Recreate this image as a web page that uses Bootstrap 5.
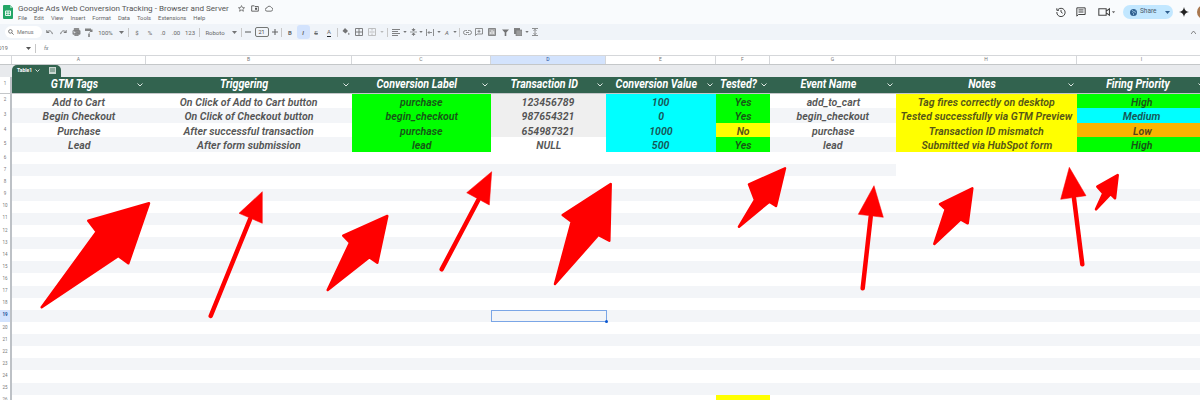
<!DOCTYPE html>
<html lang="en">
<head>
    <meta charset="UTF-8">
    <title>Google Ads Web Conversion Tracking - Browser and Server</title>
    <link href="https://cdn.jsdelivr.net/npm/bootstrap@5.3.0/dist/css/bootstrap.min.css" rel="stylesheet">
    <style>
        html, body { width: 1200px; height: 400px; overflow: hidden; }
        body { background: #fff; font-family: Roboto, "Liberation Sans", sans-serif; color: #444746; position: relative; }
        svg { display: block; flex: none; }
        .titlebar { height: 24px; background: #f9fbfd; padding: 0 0 0 3px; }
        .title-block { margin-left: 5px; }
        .doc-title { font-size: 8.1px; line-height: 11px; color: #555; }
        .doc-icons { gap: 6px; margin-left: 9px; }
        .menus { font-size: 5.8px; line-height: 8px; color: #666; gap: 7px; }
        .top-right { width: 147px; flex: none; }
        .ml-3 { margin-left: 3px; } .ml-6 { margin-left: 6px; } .ml-7 { margin-left: 7px; } .ml-8 { margin-left: 8px; } .ml-10 { margin-left: 10px; } .ml-12 { margin-left: 12px; }
        .share { height: 14px; }
        .share .btn { background: #c2e7ff; border: 0; color: #4a5a68; font-size: 6.5px; padding: 0; height: 14px; display: flex; align-items: center; }
        .share .s-main { width: 38px; padding-left: 7px; gap: 3px; border-radius: 7px 0 0 7px; margin-right: 1px; }
        .share .s-drop { width: 12px; justify-content: center; border-radius: 0 7px 7px 0; }
        .avatar { width: 14px; height: 14px; background: #a9784f; flex: none; }

        .toolbar { height: 16px; background: #f0f4f9; padding-left: 5px; }
        .search { width: 37px; height: 12px; background: #fff; font-size: 5.5px; color: #777; padding-left: 3px; gap: 3px; margin-right: 1.5px; flex: none; }
        .tb { width: 13px; height: 14px; flex: none; display: flex; align-items: center; justify-content: center; font-size: 6px; color: #666; }
        .tb svg { opacity: .8; }
        .tb.active { background: #d3e3fd; border-radius: 3px; }
        .tb.w5 { width: 5px; } .tb.w7 { width: 7px; } .tb.w8 { width: 8px; } .tb.w10 { width: 10px; } .tb.w11 { width: 11px; } .tb.w15 { width: 15px; }
        .tb.w20 { width: 20px; } .tb.w27 { width: 27px; }
        .sep { width: 1px; height: 9px; background: #c7c7c7; flex: none; margin: 0 1.5px; }
        .size-box { width: 14px; height: 10px; border: 1px solid #747775; border-radius: 2px; font-size: 5.5px; line-height: 8px; text-align: center; flex: none; margin: 0 1px 0 3px; color: #444; }
        .formula { height: 14.5px; background: #fff; font-size: 5.5px; color: #666; padding-top: 2px; }
        .formula .ref { width: 28px; margin-left: -2px; }

        .gs-row { display: grid; grid-template-columns: 12px 134px 206px 139px 115px 110px 54px 126px 181px 130px; grid-template-rows: 100%; width: 1207px; height: 12.13px; }
        .gs-row.alt { background: #f3f5f8; }
        .rh { background: #fff; border-right: 2px solid #bdc1c6; font-size: 4.5px; color: #777; text-align: center; display: flex; align-items: center; justify-content: center; }
        .rh.on { background: #d3e3fd; color: #1f4f99; font-weight: 700; }
        .col-row { height: 10.5px; border-top: 1px solid #d5d7da; border-bottom: 1px solid #c4c7c9; background: #fff; }
        .col-row > div { font-size: 5px; color: #777; display: flex; align-items: center; justify-content: center; border-right: 1px solid #d5d7da; }
        .col-row .on { background: #d3e3fd; color: #1f4f99; }
        .band { height: 11.5px; background: #e8eaed; padding-left: 12px; }
        .table-tab { width: 49px; height: 11.5px; background: #32634f; border-radius: 5px 5px 0 0; color: #fff; font-size: 5px; font-weight: 700; padding-left: 5px; gap: 3px; }
        .head-row { height: 16px; background: #32634f; border-bottom: 1px solid #c4c7c9; box-sizing: content-box; }
        .head-row .th { color: #fff; font-size: 12.4px; font-weight: 700; font-style: italic; padding-right: 3px; white-space: nowrap; }
        .th span { flex: 1 1 0; display: flex; justify-content: center; }
        .th span b { font-weight: 700; flex: none; transform: scaleX(.86); }
        .data-row { height: 14.67px; }
        .data-row .td { display: flex; justify-content: center; font-size: 11.6px; line-height: 16.5px; font-weight: 700; font-style: italic; color: rgba(30, 30, 30, .76); white-space: nowrap; }
        .td span { flex: none; transform: scaleX(.91); }
        .bg-g { background: #0f0; } .bg-c { background: #0ff; } .bg-y { background: #ff0; } .bg-o { background: #fbb400; } .bg-e { background: #efefef; } .bg-w { background: #fff; }
        .span-stripe { grid-column: 2 / 9; background: #f3f5f8; }
        .cell-sel { grid-column: 5; border: 1px solid #7ba6e6; position: relative; margin: 0 -1px 0 0; }
        .cell-sel::after { content: ""; position: absolute; right: -2px; bottom: -2px; width: 3px; height: 3px; background: #0b57d0; border-radius: 50%; }
        .cell-f { grid-column: 7; }
        .arrows { position: absolute; left: 0; top: 0; pointer-events: none; }
        .arrows polygon { fill: #f00; stroke: #f00; stroke-width: 2.5; stroke-linejoin: round; }
        .arrows line { stroke: #f00; stroke-width: 4.5; stroke-linecap: round; }
        .arrows polygon.head { stroke-width: .5; }
    </style>
</head>
<body>
    <div class="titlebar d-flex align-items-center">
        <svg width="10" height="14" viewBox="0 0 10 14"><path d="M1 0h6l3 3v10a1 1 0 0 1-1 1H1a1 1 0 0 1-1-1V1a1 1 0 0 1 1-1z" fill="#23a566"/><path d="M7 0l3 3H7z" fill="#8ed1b1"/><path d="M2.5 6h5v4.500h-5z M5 6v4.500 M2.500 8.200h5" fill="none" stroke="#fff" stroke-width=".9"/></svg>
        <div class="title-block">
            <div class="d-flex align-items-center">
                <span class="doc-title">Google Ads Web Conversion Tracking - Browser and Server</span>
                <div class="doc-icons d-flex align-items-center">
                    <svg width="7" height="7" viewBox="0 0 12 12"><path d="M6 1l1.500 3.400 3.700.3-2.800 2.400.9 3.600L6 8.800l-3.300 1.900.9-3.600L.8 4.700l3.700-.3z" fill="none" stroke="#555" stroke-width="1.200"/></svg>
                    <svg width="8" height="7" viewBox="0 0 12 10"><path d="M1 1h4l1 1h5v7H1z" fill="none" stroke="#555" stroke-width="1.300"/><path d="M6 4h3v3H6z" fill="#555"/></svg>
                    <svg width="8" height="7" viewBox="0 0 12 10"><path d="M3 9a2.500 2.500 0 0 1 0-5 3.500 3.500 0 0 1 6.500-.5A2.800 2.800 0 0 1 9 9z" fill="none" stroke="#555" stroke-width="1.200"/></svg>
                </div>
            </div>
            <div class="menus d-flex"><span>File</span><span>Edit</span><span>View</span><span>Insert</span><span>Format</span><span>Data</span><span>Tools</span><span>Extensions</span><span>Help</span></div>
        </div>
        <div class="top-right ms-auto d-flex align-items-center">
            <svg class="ml-3" width="10" height="10" viewBox="0 0 12 12"><path d="M2 3.500A5 5 0 1 1 1 6M1 1.500v2.500h2.500M6 3.500V6l2 1.500" fill="none" stroke="#444" stroke-width="1.200"/></svg>
            <svg class="ml-10" width="10" height="10" viewBox="0 0 12 12"><path d="M1 1h10v8h-8l-2 2z M3 3.500h6M3 6h6" fill="none" stroke="#444" stroke-width="1.200"/></svg>
            <svg class="ml-12" width="18" height="10" viewBox="0 0 22 12"><path d="M1 2h9v8H1z M10 5l4-3v8l-4-3" fill="none" stroke="#444" stroke-width="1.300"/><path d="M17 5h4l-2 2.500z" fill="#666"/></svg>
            <div class="share btn-group ml-7">
                <button class="btn s-main"><svg width="7" height="7" viewBox="0 0 8 8"><circle cx="4" cy="4" r="4" fill="#2f5f8f"/><path d="M2 1l2 1.500L3 4l1 1v2M6 2L5 3.500l2 1" stroke="#c2e7ff" stroke-width=".7" fill="none"/></svg>Share</button>
                <button class="btn s-drop"><svg width="5" height="3" viewBox="0 0 5 3"><path d="M0 0h5L2.500 3z" fill="#2f5f8f"/></svg></button>
            </div>
            <svg class="ml-6" width="10" height="10" viewBox="0 0 10 10"><path d="M5 0c.5 3 2 4.500 5 5-3 .5-4.500 2-5 5-.5-3-2-4.500-5-5 3-.5 4.500-2 5-5z" fill="#222"/></svg>
            <div class="avatar rounded-circle ml-8"></div>
        </div>
    </div>

    <div class="toolbar d-flex align-items-center">
        <div class="search rounded-pill d-flex align-items-center"><svg width="6" height="6" viewBox="0 0 8 8"><path d="M3.200.8a2.400 2.400 0 1 0 0 4.800 2.400 2.400 0 0 0 0-4.800zM5 5l2.500 2.500" fill="none" stroke="#555" stroke-width="1"/></svg>Menus</div>
        <div class="tb"><svg width="8" height="7" viewBox="0 0 10 8"><path d="M1 1v3h3M1 4c2-3 6-3 7 2" fill="none" stroke="#555" stroke-width="1.200"/></svg></div>
        <div class="tb"><svg width="8" height="7" viewBox="0 0 10 8"><path d="M9 1v3H6M9 4C7 1 3 1 2 6" fill="none" stroke="#555" stroke-width="1.200"/></svg></div>
        <div class="tb"><svg width="9" height="8" viewBox="0 0 10 9"><path d="M2.500 3V.5h5V3M1 3h8v4H7.500M2.500 7H1V3M3 5.500h4v3H3z" fill="#777" stroke="#555" stroke-width=".8"/></svg></div>
        <div class="tb"><svg width="8" height="9" viewBox="0 0 8 9"><path d="M0 .5h6v2.500H0zM6 1.500h1.500V4H4v1.500M3.200 5.500h1.600V9H3.200z" fill="#666"/></svg></div>
        <div class="tb w20">100%</div>
        <div class="tb w11"><svg width="5" height="3" viewBox="0 0 5 3"><path d="M0 0h5L2.500 3z" fill="#555"/></svg></div>
        <div class="sep"></div>
        <div class="tb">$</div>
        <div class="tb">%</div>
        <div class="tb">.0</div>
        <div class="tb">.00</div>
        <div class="tb w15">123</div>
        <div class="sep"></div>
        <div class="tb w27">Roboto</div>
        <div class="tb w11"><svg width="5" height="3" viewBox="0 0 5 3"><path d="M0 0h5L2.500 3z" fill="#555"/></svg></div>
        <div class="sep"></div>
        <div class="tb w8"><svg width="6" height="2" viewBox="0 0 6 2"><path d="M0 1h6" stroke="#444" stroke-width="1.100"/></svg></div>
        <div class="size-box">21</div>
        <div class="tb w10"><svg width="6" height="6" viewBox="0 0 6 6"><path d="M0 3h6M3 0v6" stroke="#444" stroke-width="1.100"/></svg></div>
        <div class="sep"></div>
        <div class="tb fw-bold">B</div>
        <div class="tb active fw-bold fst-italic">I</div>
        <div class="tb text-decoration-line-through">S</div>
        <div class="tb"><span class="border-bottom border-dark">A</span></div>
        <div class="sep"></div>
        <div class="tb"><svg width="8" height="8" viewBox="0 0 8 8"><path d="M3 0l3 3-2.500 2.500L.5 3z" fill="#555"/><path d="M6.800 4.500l.8 1.500a.8.800 0 1 1-1.600 0z" fill="#555"/></svg></div>
        <div class="tb"><svg width="8" height="8" viewBox="0 0 8 8"><path d="M.5.500h7v7h-7zM4 .5v7M.5 4h7" fill="none" stroke="#555" stroke-width=".9"/></svg></div>
        <div class="tb"><svg width="8" height="8" viewBox="0 0 8 8"><path d="M.5.500h7v7h-7zM4 .5v2M4 5.500v2M1.500 4h5" fill="none" stroke="#aaa" stroke-width=".9"/></svg></div>
        <div class="tb w7"><svg width="4" height="2" viewBox="0 0 5 3"><path d="M0 0h5L2.500 3z" fill="#aaa"/></svg></div>
        <div class="sep"></div>
        <div class="tb"><svg width="8" height="7" viewBox="0 0 8 7"><path d="M0 .5h8M0 2.500h6M0 4.500h8M0 6.500h6" stroke="#555" stroke-width=".9"/></svg></div>
        <div class="tb w5"><svg width="4" height="2" viewBox="0 0 5 3"><path d="M0 0h5L2.500 3z" fill="#555"/></svg></div>
        <div class="tb w11"><svg width="7" height="8" viewBox="0 0 7 8"><path d="M0 4h7M3.500 0v3M3.500 5v3M2 1.500h3L3.500 3zM2 6.500h3L3.500 5z" fill="#555" stroke="#555" stroke-width=".7"/></svg></div>
        <div class="tb w5"><svg width="4" height="2" viewBox="0 0 5 3"><path d="M0 0h5L2.500 3z" fill="#555"/></svg></div>
        <div class="tb"><svg width="8" height="7" viewBox="0 0 8 7"><path d="M.5 0v7M7.500 0v7M2 3.500h4M3.500 2L2 3.500 3.500 5" fill="none" stroke="#555" stroke-width=".8"/></svg></div>
        <div class="tb w5"><svg width="4" height="2" viewBox="0 0 5 3"><path d="M0 0h5L2.500 3z" fill="#555"/></svg></div>
        <div class="tb w11"><span class="fst-italic">A</span></div>
        <div class="tb w5"><svg width="4" height="2" viewBox="0 0 5 3"><path d="M0 0h5L2.500 3z" fill="#555"/></svg></div>
        <div class="sep"></div>
        <div class="tb w11"><svg width="9" height="5" viewBox="0 0 9 5"><path d="M4 .5H2.500a2 2 0 0 0 0 4H4M5 .5h1.500a2 2 0 0 1 0 4H5M3 2.500h3" fill="none" stroke="#555" stroke-width=".8"/></svg></div>
        <div class="tb"><svg width="8" height="8" viewBox="0 0 8 8"><path d="M.5.500h7v5.500H2L.5 7.500zM4 1.800v3M2.500 3.300h3" fill="none" stroke="#555" stroke-width=".8"/></svg></div>
        <div class="tb"><svg width="8" height="8" viewBox="0 0 8 8"><path d="M.5.500h7v7h-7z" fill="#999" stroke="#555" stroke-width=".8"/><path d="M2.300 6V4M4 6V2M5.700 6V3.200" stroke="#fff" stroke-width=".8"/></svg></div>
        <div class="tb"><svg width="7" height="7" viewBox="0 0 7 7"><path d="M0 .5h7L4.300 3.500V7H2.700V3.500z" fill="#555"/></svg></div>
        <div class="tb"><svg width="8" height="8" viewBox="0 0 8 8"><path d="M0 0h6v6H0z" fill="#666"/><path d="M2 2h6v6H2z" fill="#888" stroke="#555" stroke-width=".6"/></svg></div>
        <div class="tb w5"><svg width="4" height="2" viewBox="0 0 5 3"><path d="M0 0h5L2.500 3z" fill="#555"/></svg></div>
        <div class="tb w11"><svg width="6" height="8" viewBox="0 0 6 8"><path d="M0 .5h6M0 7.500h6M3 1.500v5M1.500 2.800L3 1.300l1.500 1.500M1.500 5.200L3 6.700l1.500-1.500" fill="none" stroke="#555" stroke-width=".8"/></svg></div>
        <svg class="ms-auto me-1" width="5" height="3" viewBox="0 0 5 3"><path d="M0 3l2.500-3L5 3" fill="none" stroke="#666" stroke-width=".8"/></svg>
    </div>

    <div class="formula d-flex align-items-center">
        <span class="ref">D19</span>
        <svg width="5" height="3" viewBox="0 0 5 3"><path d="M0 0h5L2.500 3z" fill="#555"/></svg>
        <div class="sep mx-1"></div>
        <span class="fst-italic text-secondary ms-1">fx</span>
    </div>

    <div class="gs-row col-row">
        <div></div><div>A</div><div>B</div><div>C</div><div class="on">D</div><div>E</div><div>F</div><div>G</div><div>H</div><div>I</div>
    </div>
    <div class="band">
        <div class="table-tab d-flex align-items-center">Table1
            <svg width="5" height="3" viewBox="0 0 5 3"><path d="M.5.500L2.500 2.500 4.500.5" fill="none" stroke="#fff" stroke-width=".8"/></svg>
            <svg class="ml-6" width="7" height="7" viewBox="0 0 7 7"><path d="M0 0h7v7H0z" fill="#c9d6d0"/><path d="M1 2h5M1 4h5" stroke="#32634f" stroke-width=".8"/></svg>
        </div>
    </div>

    <div class="gs-row head-row">
        <div class="rh">1</div>
        <div class="th d-flex align-items-center"><span><b>GTM Tags</b></span><svg width="6" height="4" viewBox="0 0 6 4"><path d="M.5.500L3 3 5.500.5" fill="none" stroke="#dfe8e4" stroke-width="1"/></svg></div>
        <div class="th d-flex align-items-center"><span><b>Triggering</b></span><svg width="6" height="4" viewBox="0 0 6 4"><path d="M.5.500L3 3 5.500.5" fill="none" stroke="#dfe8e4" stroke-width="1"/></svg></div>
        <div class="th d-flex align-items-center"><span><b>Conversion Label</b></span><svg width="6" height="4" viewBox="0 0 6 4"><path d="M.5.500L3 3 5.500.5" fill="none" stroke="#dfe8e4" stroke-width="1"/></svg></div>
        <div class="th d-flex align-items-center"><span><b>Transaction ID</b></span><svg width="6" height="4" viewBox="0 0 6 4"><path d="M.5.500L3 3 5.500.5" fill="none" stroke="#dfe8e4" stroke-width="1"/></svg></div>
        <div class="th d-flex align-items-center"><span><b>Conversion Value</b></span><svg width="6" height="4" viewBox="0 0 6 4"><path d="M.5.500L3 3 5.500.5" fill="none" stroke="#dfe8e4" stroke-width="1"/></svg></div>
        <div class="th d-flex align-items-center"><span><b>Tested?</b></span><svg width="6" height="4" viewBox="0 0 6 4"><path d="M.5.500L3 3 5.500.5" fill="none" stroke="#dfe8e4" stroke-width="1"/></svg></div>
        <div class="th d-flex align-items-center"><span><b>Event Name</b></span><svg width="6" height="4" viewBox="0 0 6 4"><path d="M.5.500L3 3 5.500.5" fill="none" stroke="#dfe8e4" stroke-width="1"/></svg></div>
        <div class="th d-flex align-items-center"><span><b>Notes</b></span><svg width="6" height="4" viewBox="0 0 6 4"><path d="M.5.500L3 3 5.500.5" fill="none" stroke="#dfe8e4" stroke-width="1"/></svg></div>
        <div class="th d-flex align-items-center"><span><b>Firing Priority</b></span><svg width="6" height="4" viewBox="0 0 6 4"><path d="M.5.500L3 3 5.500.5" fill="none" stroke="#dfe8e4" stroke-width="1"/></svg></div>
    </div>

    <div class="gs-row data-row">
        <div class="rh">2</div>
        <div class="td"><span>Add to Cart</span></div><div class="td"><span>On Click of Add to Cart button</span></div><div class="td bg-g"><span>purchase</span></div><div class="td bg-e"><span>123456789</span></div><div class="td bg-c"><span>100</span></div><div class="td bg-g"><span>Yes</span></div><div class="td"><span>add_to_cart</span></div><div class="td bg-y"><span>Tag fires correctly on desktop</span></div><div class="td bg-g"><span>High</span></div>
    </div>
    <div class="gs-row data-row alt">
        <div class="rh">3</div>
        <div class="td"><span>Begin Checkout</span></div><div class="td"><span>On Click of Checkout button</span></div><div class="td bg-g"><span>begin_checkout</span></div><div class="td bg-e"><span>987654321</span></div><div class="td bg-c"><span>0</span></div><div class="td bg-g"><span>Yes</span></div><div class="td"><span>begin_checkout</span></div><div class="td bg-y"><span>Tested successfully via GTM Preview</span></div><div class="td bg-c"><span>Medium</span></div>
    </div>
    <div class="gs-row data-row">
        <div class="rh">4</div>
        <div class="td"><span>Purchase</span></div><div class="td"><span>After successful transaction</span></div><div class="td bg-g"><span>purchase</span></div><div class="td bg-e"><span>654987321</span></div><div class="td bg-c"><span>1000</span></div><div class="td bg-y"><span>No</span></div><div class="td"><span>purchase</span></div><div class="td bg-y"><span>Transaction ID mismatch</span></div><div class="td bg-o"><span>Low</span></div>
    </div>
    <div class="gs-row data-row alt">
        <div class="rh">5</div>
        <div class="td"><span>Lead</span></div><div class="td"><span>After form submission</span></div><div class="td bg-g"><span>lead</span></div><div class="td bg-w"><span>NULL</span></div><div class="td bg-c"><span>500</span></div><div class="td bg-g"><span>Yes</span></div><div class="td"><span>lead</span></div><div class="td bg-y"><span>Submitted via HubSpot form</span></div><div class="td bg-g"><span>High</span></div>
    </div>
    <div class="gs-row"><div class="rh">6</div></div>
    <div class="gs-row"><div class="rh">7</div><div class="span-stripe"></div></div>
    <div class="gs-row"><div class="rh">8</div></div>
    <div class="gs-row alt"><div class="rh">9</div></div>
    <div class="gs-row"><div class="rh">10</div></div>
    <div class="gs-row alt"><div class="rh">11</div></div>
    <div class="gs-row"><div class="rh">12</div></div>
    <div class="gs-row alt"><div class="rh">13</div></div>
    <div class="gs-row"><div class="rh">14</div></div>
    <div class="gs-row alt"><div class="rh">15</div></div>
    <div class="gs-row"><div class="rh">16</div></div>
    <div class="gs-row alt"><div class="rh">17</div></div>
    <div class="gs-row"><div class="rh">18</div></div>
    <div class="gs-row alt"><div class="rh on">19</div><div class="cell-sel"></div></div>
    <div class="gs-row"><div class="rh">20</div></div>
    <div class="gs-row alt"><div class="rh">21</div></div>
    <div class="gs-row"><div class="rh">22</div></div>
    <div class="gs-row alt"><div class="rh">23</div></div>
    <div class="gs-row"><div class="rh">24</div></div>
    <div class="gs-row alt"><div class="rh">25</div></div>
    <div class="gs-row"><div class="rh">26</div><div class="cell-f bg-y"></div></div>

    <svg class="arrows" width="1200" height="400" viewBox="0 0 1200 400">
        <polygon points="41.700,307.300 96.700,231.700 88.300,220.700 149,203.300 128.300,263.300 118.300,256"/>
        <line x1="210.700" y1="316" x2="250" y2="219.300"/>
        <polygon class="head" points="262.300,191.700 239,213.300 262.300,223.300"/>
        <polygon points="327.700,290 350,242.700 343.300,235.700 387.300,216 377.300,262.700 369.300,257.300"/>
        <line x1="441.700" y1="269.300" x2="478.300" y2="200"/>
        <polygon class="head" points="491.700,171.700 466.700,192.700 489.300,205"/>
        <polygon points="555,284 571.700,221.700 562.700,215 610.700,184 609.300,240.700 598.300,235"/>
        <polygon points="739,226.700 755,200 749,184.300 785,168.300 776,206 769.300,201.700"/>
        <line x1="862.700" y1="288.300" x2="870.700" y2="216.700"/>
        <polygon class="head" points="874,185.700 858.300,214.300 883.300,217.300"/>
        <polygon points="934.300,244 945.700,209.300 940,204 972.300,188.300 967.700,223.300 960.700,219.300"/>
        <line x1="1082.300" y1="264.300" x2="1074" y2="198.300"/>
        <polygon class="head" points="1069.300,167.300 1060.700,199.300 1086,195.700"/>
        <polygon points="1096,209.300 1103.300,193.300 1097.300,186.700 1117.700,175 1115,198.300 1110.700,194"/>
    </svg>
    <script src="https://cdn.jsdelivr.net/npm/bootstrap@5.3.0/dist/js/bootstrap.bundle.min.js"></script>
</body>
</html>
